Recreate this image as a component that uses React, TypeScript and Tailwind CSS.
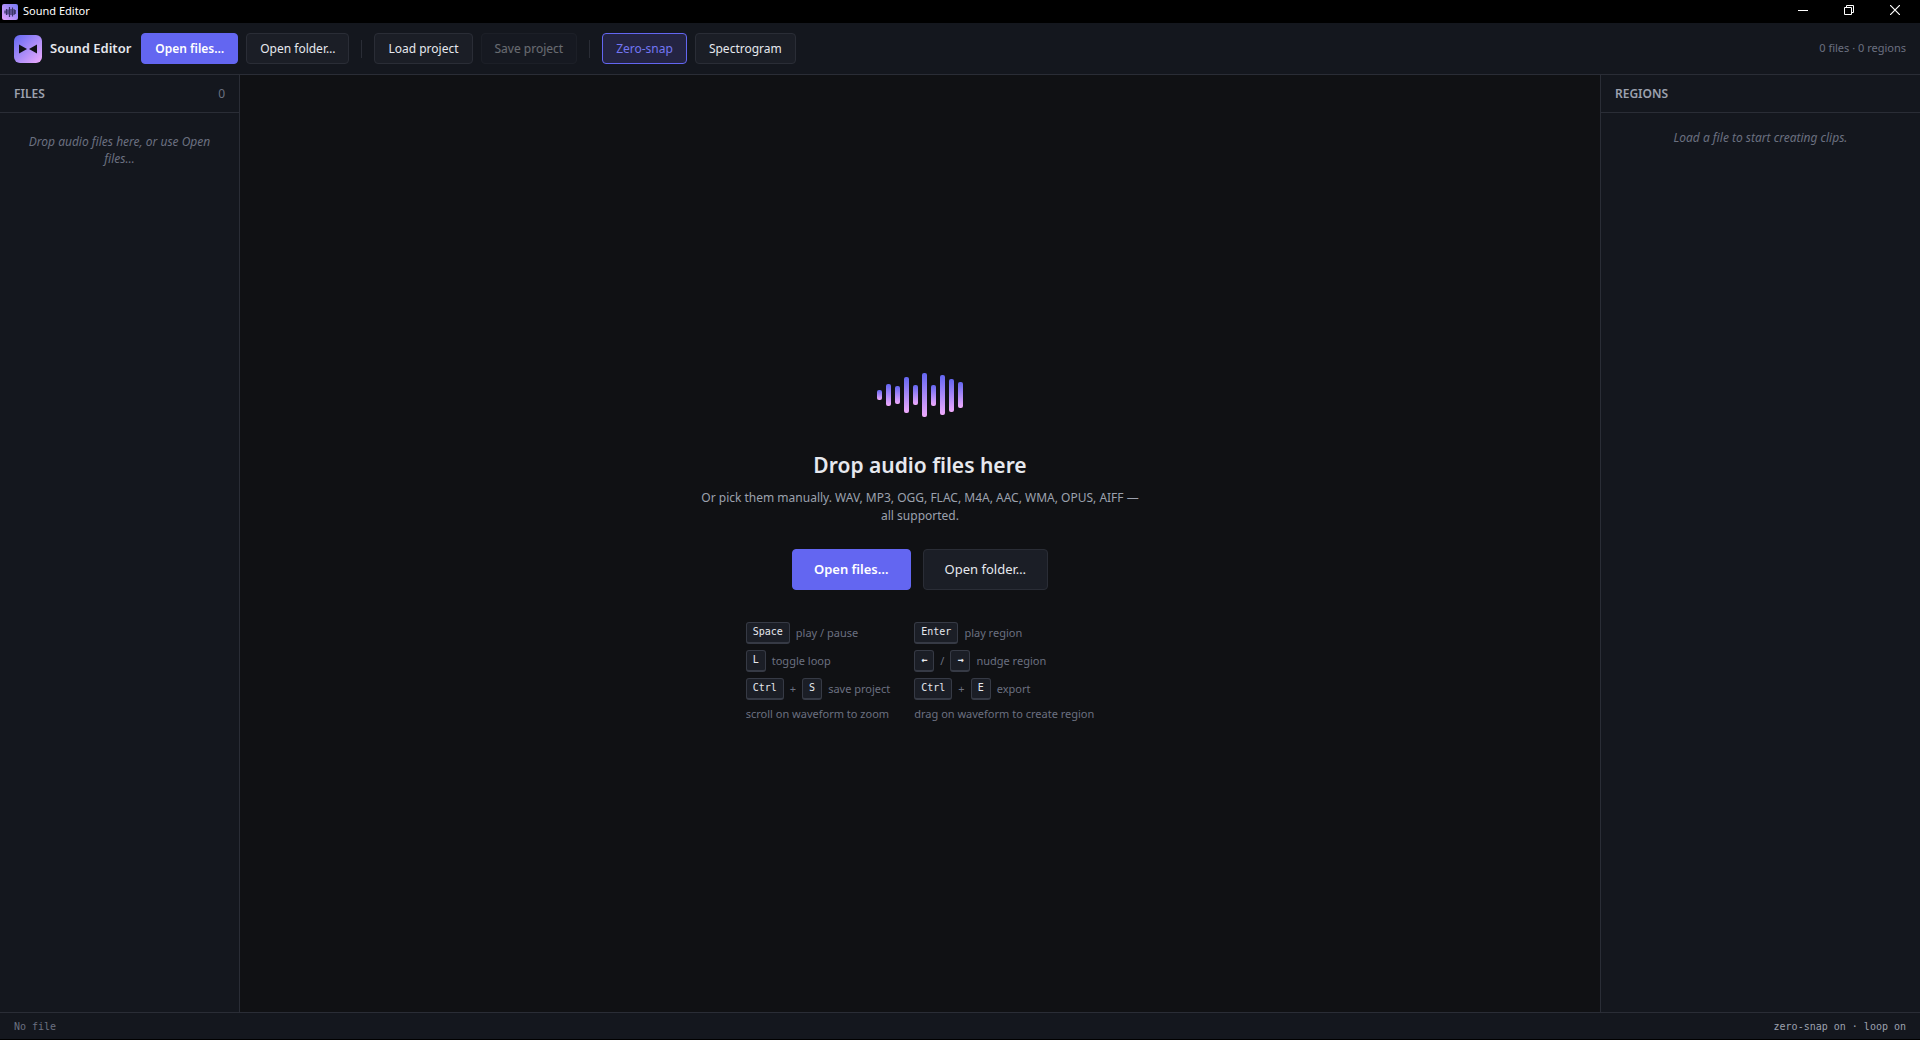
import { ReactNode } from 'react';
import clsx from 'clsx';

const bars = [
    { top: 17, height: 10 },
    { top: 11, height: 22 },
    { top: 13, height: 18 },
    { top: 4, height: 36 },
    { top: 12, height: 20 },
    { top: 0, height: 44 },
    { top: 12, height: 21 },
    { top: 2, height: 40 },
    { top: 6, height: 33 },
    { top: 9, height: 26 },
];

function Waveform() {
    return (
        <svg width="86" height="44" viewBox="0 0 86 44" aria-hidden="true">
            <defs>
                <linearGradient id="bar" x1="0" y1="0" x2="0" y2="1">
                    <stop offset="0" stopColor="#6366f1" />
                    <stop offset="1" stopColor="#f0abfc" />
                </linearGradient>
            </defs>
            {bars.map((bar, i) => (
                <rect key={i} x={i * 9} y={bar.top} width="5" height={bar.height} rx="2" fill="url(#bar)" />
            ))}
        </svg>
    );
}

function AppIcon() {
    return (
        <svg width="16" height="16" viewBox="0 0 16 16" aria-hidden="true">
            <defs>
                <linearGradient id="icon" x1="1" y1="0" x2="0" y2="1">
                    <stop offset="0" stopColor="#7478f4" />
                    <stop offset="1" stopColor="#e6a5fb" />
                </linearGradient>
            </defs>
            <rect width="16" height="16" rx="2" fill="url(#icon)" />
            <path
                d="M3 6.5v3M4.5 5v6M6 5.5v5M7.5 3v10M9 5v6M10.5 3.5v9M12 5v6M13.2 6v4"
                stroke="#3b3566"
                strokeWidth="1.2"
            />
        </svg>
    );
}

interface ButtonProps {
    children: ReactNode;
    variant?: 'default' | 'primary' | 'active';
    size?: 'sm' | 'lg';
    disabled?: boolean;
}

function Button({ children, variant = 'default', size = 'sm', disabled }: ButtonProps) {
    return (
        <button
            type="button"
            disabled={disabled}
            className={clsx(
                'rounded border whitespace-nowrap',
                size === 'sm' && 'h-[31px] px-[13px] text-[12px]',
                size === 'lg' && 'h-[41px] px-[21px] text-[13px]',
                variant === 'default' && 'border-[#2a2d36] bg-[#1b1e26] text-[#e6e8ee]',
                variant === 'primary' && 'border-[#6366f1] bg-[#6366f1] font-semibold text-white',
                variant === 'active' && 'border-[#6366f1] bg-[#242442] text-[#7376f3]',
                disabled && 'opacity-40',
            )}
        >
            {children}
        </button>
    );
}

function Divider() {
    return <div className="mx-1 h-[18px] w-px bg-[#2a2d36]" />;
}

function Key({ children }: { children: ReactNode }) {
    return (
        <kbd className="h-[22px] rounded-[3px] border border-b-2 border-[#363a45] bg-[#1b1e26] px-[6px] font-['DejaVu_Sans_Mono',monospace] text-[10px] leading-[17px] text-[#e6e8ee]">
            {children}
        </kbd>
    );
}

function Shortcut({ children }: { children: ReactNode }) {
    return <li className="flex items-center gap-[6px]">{children}</li>;
}

function Titlebar() {
    return (
        <div className="flex h-[23px] items-center bg-black px-[2px] text-white">
            <AppIcon />
            <span className="ml-[5px] text-[11px]">Sound Editor</span>
            <div className="ml-auto flex h-5 self-start">
                <button type="button" aria-label="Minimize" className="flex w-[46px] items-center justify-center">
                    <svg width="10" height="10" viewBox="0 0 10 10" stroke="currentColor">
                        <path d="M0 5.5h10" />
                    </svg>
                </button>
                <button type="button" aria-label="Restore" className="flex w-[46px] items-center justify-center">
                    <svg width="10" height="10" viewBox="0 0 10 10" fill="none" stroke="currentColor">
                        <path d="M.5 2.5h7v7h-7zM2.5 2.5v-2h7v7h-2" />
                    </svg>
                </button>
                <button type="button" aria-label="Close" className="flex w-[46px] items-center justify-center">
                    <svg width="10" height="10" viewBox="0 0 10 10" stroke="currentColor" strokeWidth="1.2">
                        <path d="M0 0l10 10M10 0L0 10" />
                    </svg>
                </button>
            </div>
        </div>
    );
}

function Toolbar() {
    return (
        <header className="flex items-center gap-2 border-b border-[#2a2d36] bg-[#14171e] px-[14px] py-[10px]">
            <div className="mr-[2px] flex items-center gap-2">
                <div className="flex size-7 items-center justify-center rounded-md bg-linear-135 from-[#6366f1] to-[#f0abfc]">
                    <svg width="20" height="10" viewBox="0 0 20 10" fill="#101216" aria-hidden="true">
                        <path d="M1 0.5v9l8-4.5zM19 0.5v9l-8-4.5z" />
                    </svg>
                </div>
                <h1 className="text-[13px] font-semibold whitespace-nowrap">Sound Editor</h1>
            </div>
            <Button variant="primary">Open files…</Button>
            <Button>Open folder…</Button>
            <Divider />
            <Button>Load project</Button>
            <Button disabled>Save project</Button>
            <Divider />
            <Button variant="active">Zero-snap</Button>
            <Button>Spectrogram</Button>
            <div className="ml-auto text-[11px] text-[#6b7080]">0 files · 0 regions</div>
        </header>
    );
}

export default function App() {
    return (
        <div className="flex h-screen flex-col border-b border-black bg-[#101114] font-['Noto_Sans',sans-serif] text-[12px] text-[#e6e8ee]">
            <Titlebar />
            <Toolbar />

            <div className="flex min-h-0 flex-1">
                <aside className="w-60 shrink-0 border-r border-[#2a2d36] bg-[#14171e]">
                    <div className="flex h-[38px] items-center justify-between border-b border-[#2a2d36] px-[14px] text-[#9ca1ae]">
                        <h2 className="font-semibold">FILES</h2>
                        <span className="text-[#6b7080]">0</span>
                    </div>
                    <p className="px-6 py-5 text-center leading-[17px] text-[#6b7080] italic">
                        Drop audio files here, or use Open files…
                    </p>
                </aside>

                <main className="flex flex-1 flex-col items-center justify-center pt-2">
                    <Waveform />
                    <h2 className="mt-8 text-[21px] leading-8 font-semibold">Drop audio files here</h2>
                    <p className="mt-2 max-w-[450px] text-center leading-[18px] text-[#9ca1ae]">
                        Or pick them manually. WAV, MP3, OGG, FLAC, M4A, AAC, WMA, OPUS, AIFF — all supported.
                    </p>
                    <div className="mt-6 flex gap-3">
                        <Button variant="primary" size="lg">Open files…</Button>
                        <Button size="lg">Open folder…</Button>
                    </div>
                    <div className="mt-8 flex gap-6 text-[11px] leading-4 text-[#6b7080]">
                        <ul className="space-y-[6px]">
                            <Shortcut><Key>Space</Key> play / pause</Shortcut>
                            <Shortcut><Key>L</Key> toggle loop</Shortcut>
                            <Shortcut><Key>Ctrl</Key> + <Key>S</Key> save project</Shortcut>
                            <Shortcut>scroll on waveform to zoom</Shortcut>
                        </ul>
                        <ul className="space-y-[6px]">
                            <Shortcut><Key>Enter</Key> play region</Shortcut>
                            <Shortcut><Key><b>←</b></Key> / <Key><b>→</b></Key> nudge region</Shortcut>
                            <Shortcut><Key>Ctrl</Key> + <Key>E</Key> export</Shortcut>
                            <Shortcut>drag on waveform to create region</Shortcut>
                        </ul>
                    </div>
                </main>

                <aside className="w-80 shrink-0 border-l border-[#2a2d36] bg-[#14171e]">
                    <div className="flex h-[38px] items-center border-b border-[#2a2d36] px-[14px] text-[#9ca1ae]">
                        <h2 className="font-semibold">REGIONS</h2>
                    </div>
                    <p className="px-6 py-4 text-center leading-[17px] text-[#6b7080] italic">
                        Load a file to start creating clips.
                    </p>
                </aside>
            </div>

            <footer className="flex h-[27px] items-center justify-between border-t border-[#2a2d36] bg-[#14171e] px-[14px] font-['DejaVu_Sans_Mono',monospace] text-[10px]">
                <span className="text-[#6b7080]">No file</span>
                <span className="text-[#9ca1ae]">zero-snap on · loop on</span>
            </footer>
        </div>
    );
}
